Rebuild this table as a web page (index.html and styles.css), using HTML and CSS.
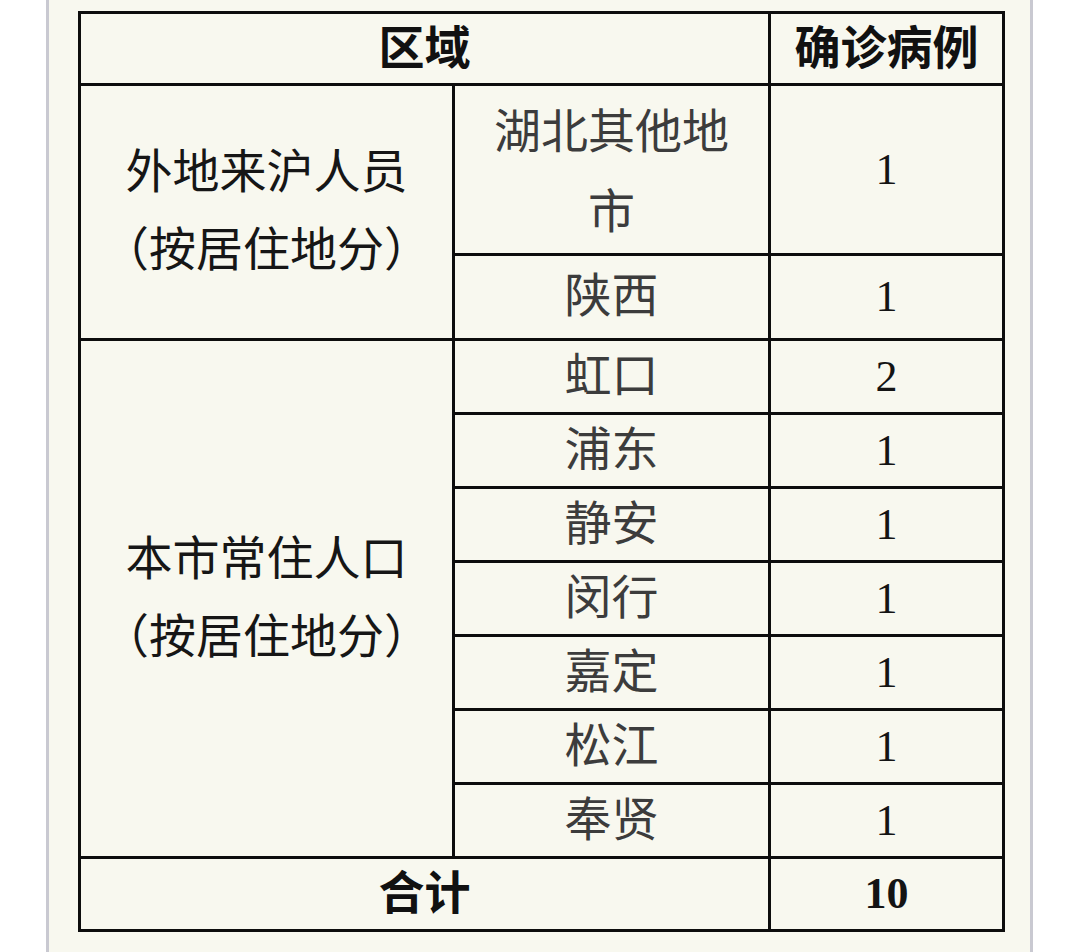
FILE: index.html
```html
<!DOCTYPE html>
<html lang="zh-CN">
<head>
<meta charset="utf-8">
<title>确诊病例</title>
<link rel="stylesheet" href="styles.css">
</head>
<body>
<div class="panel">
  <table class="cases">
    <colgroup>
      <col class="c-group">
      <col class="c-area">
      <col class="c-num">
    </colgroup>
    <tr class="r-head">
      <th colspan="2">区域</th>
      <th>确诊病例</th>
    </tr>
    <tr class="r-tall">
      <td rowspan="2" class="group">外地来沪人员<br>（按居住地分）</td>
      <td class="area wrap">湖北其他地市</td>
      <td class="num">1</td>
    </tr>
    <tr class="r-mid">
      <td class="area">陕西</td>
      <td class="num">1</td>
    </tr>
    <tr class="r-row">
      <td rowspan="7" class="group">本市常住人口<br>（按居住地分）</td>
      <td class="area">虹口</td>
      <td class="num">2</td>
    </tr>
    <tr class="r-row"><td class="area">浦东</td><td class="num">1</td></tr>
    <tr class="r-row"><td class="area">静安</td><td class="num">1</td></tr>
    <tr class="r-row"><td class="area">闵行</td><td class="num">1</td></tr>
    <tr class="r-row"><td class="area">嘉定</td><td class="num">1</td></tr>
    <tr class="r-row"><td class="area">松江</td><td class="num">1</td></tr>
    <tr class="r-row"><td class="area">奉贤</td><td class="num">1</td></tr>
    <tr class="r-total">
      <th colspan="2">合计</th>
      <th class="num">10</th>
    </tr>
  </table>
</div>
</body>
</html>
```

FILE: styles.css
```css
html, body {
  margin: 0;
  padding: 0;
  background: #ffffff;
}

.panel {
  box-sizing: border-box;
  margin-left: 46px;
  width: 987px;
  min-height: 952px;
  padding: 11px 0 0 29px;
  background: #f8f8ef;
  border-left: 3px solid #c9c9d1;
  border-right: 3px solid #c9c9d1;
}

.cases {
  border-collapse: collapse;
  table-layout: fixed;
  width: 924px;
  font-family: "Noto Sans CJK SC", "Noto Sans", sans-serif;
  font-size: 47px;
  color: #151515;
}

.c-group { width: 374px; }
.c-area { width: 316px; }
.c-num { width: 234px; }

.cases th,
.cases td {
  border: 3px solid #0d0d0d;
  padding: 0 22px 10px;
  text-align: center;
  vertical-align: middle;
  line-height: 54px;
}

.cases th {
  font-size: 46px;
  font-weight: 700;
  color: #111111;
}

.r-head { height: 72px; }
.r-tall { height: 170px; }
.r-mid { height: 85px; }
.r-row { height: 74px; }
.r-total { height: 73px; }

.group {
  padding-left: 8px !important;
  padding-right: 8px !important;
  line-height: 78px !important;
  color: #161616;
}

.area {
  color: #3c3c3c;
}

.area.wrap {
  line-height: 80px !important;
  padding-bottom: 4px;
}

.cases .num {
  padding-bottom: 0;
  font-family: "Liberation Serif", "Times New Roman", serif;
  font-size: 44px;
  color: #141414;
}
```
